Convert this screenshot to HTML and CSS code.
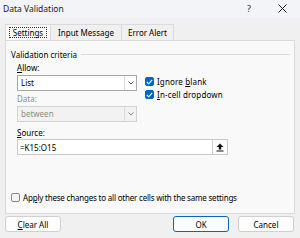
FILE: index.html
```html
<!DOCTYPE html>
<html>
<head>
    <meta charset="UTF-8">
    <title>Data Validation</title>
    <link rel="stylesheet" href="styles.css">
</head>
<body>
    <div class="dialog">
        <!-- Title bar -->
        <div class="titlebar">
            <span class="title">Data Validation</span>
            <div class="title-buttons">
                <span class="help">?</span>
                <svg class="close" width="9" height="9" viewBox="0 0 9 9">
                    <path d="M0.5 0.5L8.5 8.5M8.5 0.5L0.5 8.5" stroke="#1a1a1a" stroke-width="1" fill="none"/>
                </svg>
            </div>
        </div>

        <!-- Tabs -->
        <div class="tabs">
            <div class="tab active tab-settings"><span class="focus">Settings</span></div>
            <div class="tab tab-input">Input Message</div>
            <div class="tab tab-error">Error Alert</div>
        </div>

        <div class="panel">
            <div class="legend">
                <span>Validation criteria</span>
                <span class="legend-line"></span>
            </div>

            <div class="criteria">
                <div class="criteria-left">
                    <div class="label"><u>A</u>llow:</div>
                    <div class="select">
                        <span class="select-value">List</span>
                        <span class="select-arrow">
                            <svg width="6" height="4" viewBox="0 0 6 4"><path d="M0.5 0.5L3 3L5.5 0.5" stroke="#555" fill="none"/></svg>
                        </span>
                    </div>
                    <div class="label disabled">Data:</div>
                    <div class="select disabled">
                        <span class="select-value">between</span>
                        <span class="select-arrow">
                            <svg width="6" height="4" viewBox="0 0 6 4"><path d="M0.5 0.5L3 3L5.5 0.5" stroke="#888" fill="none"/></svg>
                        </span>
                    </div>
                </div>
                <div class="criteria-right">
                    <div class="check-row">
                        <span class="checkbox checked">
                            <svg width="7" height="6" viewBox="0 0 7 6"><path d="M0.8 3L2.7 4.8L6.2 0.9" stroke="#fff" stroke-width="1.1" fill="none"/></svg>
                        </span>
                        <span>Ignore <u>b</u>lank</span>
                    </div>
                    <div class="check-row">
                        <span class="checkbox checked">
                            <svg width="7" height="6" viewBox="0 0 7 6"><path d="M0.8 3L2.7 4.8L6.2 0.9" stroke="#fff" stroke-width="1.1" fill="none"/></svg>
                        </span>
                        <span><u>I</u>n-cell dropdown</span>
                    </div>
                </div>
            </div>

            <div class="source">
                <div class="label"><u>S</u>ource:</div>
                <div class="source-input">
                    <span class="source-value">=K15:O15</span>
                    <span class="collapse-btn">
                        <svg width="8" height="9" viewBox="0 0 8 9">
                            <path d="M4 0.5L7.5 4H5.2V6.5H2.8V4H0.5Z" fill="#111"/>
                            <rect x="0.5" y="7.5" width="7" height="1" fill="#111"/>
                        </svg>
                    </span>
                </div>
            </div>

            <div class="apply-row">
                <span class="checkbox"></span>
                <span>Ap<u>p</u>ly these changes to all other cells with the same settings</span>
            </div>
        </div>

        <!-- Bottom buttons -->
        <div class="buttons">
            <button class="btn"><u>C</u>lear All</button>
            <div class="buttons-right">
                <button class="btn default">OK</button>
                <button class="btn">Cancel</button>
            </div>
        </div>
    </div>
</body>
</html>
```

FILE: styles.css
```css
body {
    margin: 0;
    font-family: "Noto Sans", "Open Sans", sans-serif;
    font-size: 8px;
    color: #000;
    background-color: #f0f0f0;
}

.dialog {
    width: 300px;
    height: 238px;
    background-color: #f0f0f0;
    overflow: hidden;
}

/* Title bar */
.titlebar {
    height: 17px;
    display: flex;
    align-items: center;
    justify-content: space-between;
    padding-left: 3px;
    padding-bottom: 1px;
    background-color: #f3f4f7;
    font-size: 8.5px;
    color: #1a1a1a;
}

.title-buttons {
    display: flex;
    align-items: center;
    gap: 27px;
    padding-right: 13px;
}

.help {
    font-size: 9px;
}

/* Tabs */
.tabs {
    display: flex;
    margin: 6px 0 0 5px;
    height: 16px;
}

.tab {
    display: flex;
    align-items: center;
    justify-content: center;
    box-sizing: border-box;
    border: 1px solid #dadada;
    border-bottom: none;
    border-left: none;
    background-color: #f0f0f0;
}

.tab.active {
    border-left: 1px solid #dadada;
    background-color: #f9f9f9;
}

.tab-settings { width: 46px; }
.tab-input { width: 71px; }
.tab-error { width: 52px; }

.focus {
    border: 1px dotted #333;
    padding: 0 3px;
    line-height: 9px;
}

/* Panel */
.panel {
    margin: 0 5px 0 5px;
    height: 172px;
    border: 1px solid #dadada;
    background-color: #f9f9f9;
    padding: 0 4px 0 5px;
}

.legend {
    display: flex;
    align-items: center;
    gap: 4px;
    height: 12px;
    margin-top: 7px;
}

.legend-line {
    flex: 1;
    border-top: 1px solid #dcdcdc;
}

.label {
    height: 12px;
    line-height: 12px;
}

.label.disabled {
    color: #8c8c8c;
}

.criteria {
    display: flex;
    gap: 8px;
    margin: 2px 0 0 6px;
}

.criteria-left {
    width: 120px;
}

.select {
    display: flex;
    height: 16px;
    margin: 1px 0 2px;
    border: 1px solid #a8a8a8;
    background-color: #fff;
    box-sizing: border-box;
}

.select.disabled {
    border-color: #d2d2d2;
    background-color: #f2f2f2;
    color: #8c8c8c;
}

.select-value {
    flex: 1;
    padding-left: 3px;
    line-height: 14px;
}

.select-arrow {
    width: 11px;
    display: flex;
    align-items: center;
    justify-content: center;
    border-left: 1px solid #dadada;
}

.criteria-right {
    padding-top: 13px;
}

.check-row {
    display: flex;
    align-items: center;
    gap: 3px;
    height: 13px;
    letter-spacing: 0.15px;
}

.checkbox {
    width: 9px;
    height: 9px;
    box-sizing: border-box;
    border: 1px solid #8a8a8a;
    border-radius: 2px;
    background-color: #f4f4f4;
    display: inline-flex;
    align-items: center;
    justify-content: center;
}

.checkbox.checked {
    border-color: #0067c0;
    background-color: #0067c0;
}

/* Source */
.source {
    margin: 3px 0 0 6px;
}

.source-input {
    display: flex;
    align-items: center;
    width: 211px;
    height: 16px;
    box-sizing: border-box;
    border: 1px solid #c8c8c8;
    background-color: #fff;
}

.source-value {
    flex: 1;
    padding-left: 2px;
}

.collapse-btn {
    width: 15px;
    height: 14px;
    box-sizing: border-box;
    border-left: 1px solid #d0d0d0;
    background-color: #fbfbfb;
    display: flex;
    align-items: center;
    justify-content: center;
}

.apply-row {
    display: flex;
    align-items: center;
    gap: 3px;
    height: 12px;
    margin-top: 36px;
    letter-spacing: -0.2px;
}

/* Buttons */
.buttons {
    display: flex;
    justify-content: space-between;
    margin: 2px 6px 0 5px;
}

.buttons-right {
    display: flex;
    gap: 9px;
}

.btn {
    width: 56px;
    height: 16px;
    padding: 0;
    font-family: inherit;
    font-size: 8px;
    color: #000;
    border: 1px solid #d0d0d0;
    border-radius: 3px;
    background-color: #fdfdfd;
}

.btn.default {
    border-color: #0067c0;
}
```
